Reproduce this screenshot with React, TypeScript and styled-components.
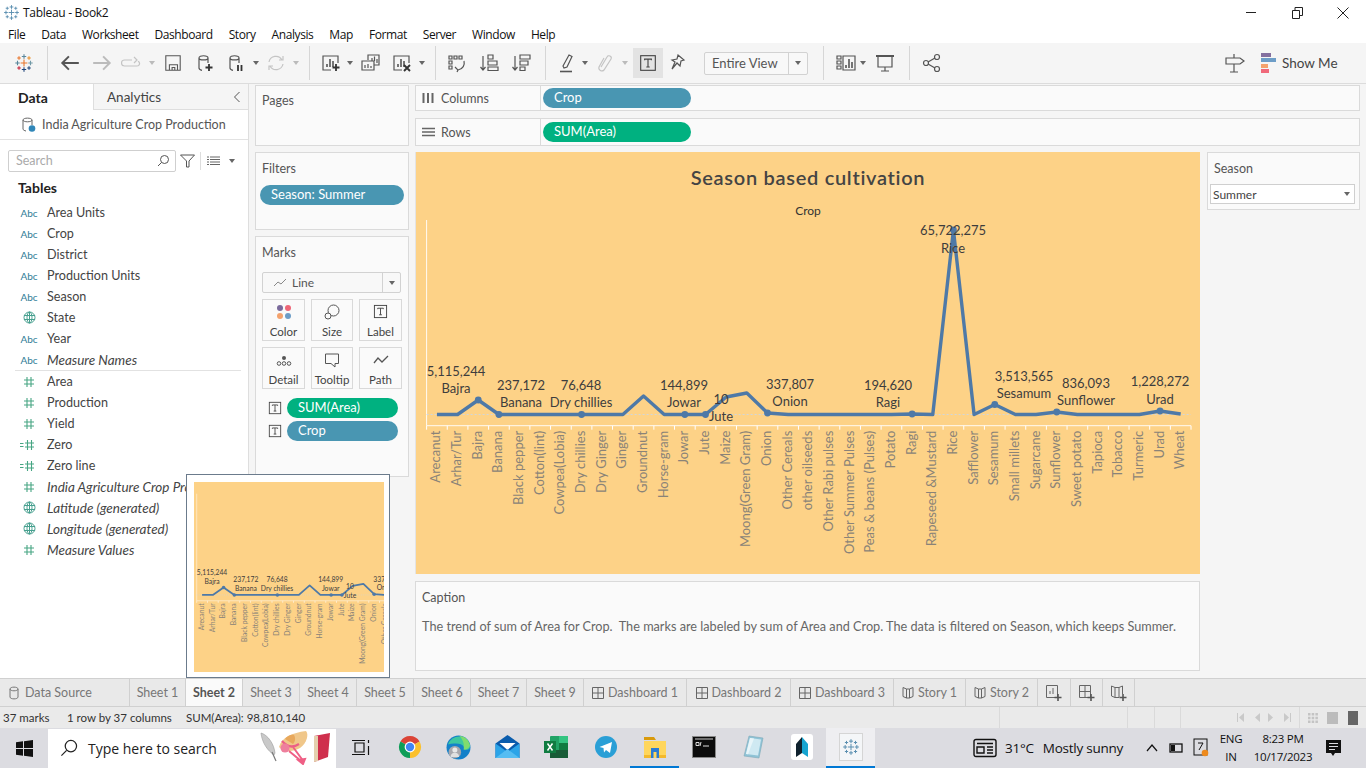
import React from "react";
import styled, { createGlobalStyle } from "styled-components";

// ─── Data ────────────────────────────────────────────────────────────────────

type Crop = { name: string; y?: number; mark?: boolean };

const crops: Crop[] = [
  { name: "Arecanut" },
  { name: "Arhar/Tur" },
  { name: "Bajra", y: 400, mark: true },
  { name: "Banana", mark: true },
  { name: "Black pepper" },
  { name: "Cotton(lint)" },
  { name: "Cowpea(Lobia)" },
  { name: "Dry chillies", mark: true },
  { name: "Dry Ginger" },
  { name: "Ginger" },
  { name: "Groundnut", y: 396 },
  { name: "Horse-gram" },
  { name: "Jowar", mark: true },
  { name: "Jute", mark: true },
  { name: "Maize", y: 397 },
  { name: "Moong(Green Gram)", y: 393 },
  { name: "Onion", y: 413, mark: true },
  { name: "Other Cereals" },
  { name: "other oilseeds" },
  { name: "Other Rabi pulses" },
  { name: "Other Summer Pulses" },
  { name: "Peas & beans (Pulses)" },
  { name: "Potato" },
  { name: "Ragi", y: 414, mark: true },
  { name: "Rapeseed &Mustard" },
  { name: "Rice", y: 230, mark: true },
  { name: "Safflower" },
  { name: "Sesamum", y: 404.5, mark: true },
  { name: "Small millets" },
  { name: "Sugarcane" },
  { name: "Sunflower", y: 412, mark: true },
  { name: "Sweet potato" },
  { name: "Tapioca" },
  { name: "Tobacco" },
  { name: "Turmeric" },
  { name: "Urad", y: 411, mark: true },
  { name: "Wheat", y: 414 },
];

const markLabels = [
  { value: "5,115,244", name: "Bajra", x: 455, y: 371, nameY: 388 },
  { value: "237,172", name: "Banana", x: 520, y: 385, nameY: 402 },
  { value: "76,648", name: "Dry chillies", x: 580, y: 385, nameY: 402 },
  { value: "144,899", name: "Jowar", x: 683, y: 385, nameY: 402 },
  { value: "10", name: "Jute", x: 720, y: 399, nameY: 416 },
  { value: "337,807", name: "Onion", x: 789, y: 384, nameY: 401 },
  { value: "194,620", name: "Ragi", x: 887, y: 385, nameY: 402 },
  { value: "65,722,275", name: "Rice", x: 952, y: 230, nameY: 248 },
  { value: "3,513,565", name: "Sesamum", x: 1023, y: 376, nameY: 393 },
  { value: "836,093", name: "Sunflower", x: 1085, y: 383, nameY: 400 },
  { value: "1,228,272", name: "Urad", x: 1159, y: 381, nameY: 399 },
];

const fieldsTop = [
  { kind: "abc", name: "Area Units" },
  { kind: "abc", name: "Crop" },
  { kind: "abc", name: "District" },
  { kind: "abc", name: "Production Units" },
  { kind: "abc", name: "Season" },
  { kind: "geo", name: "State" },
  { kind: "abc", name: "Year" },
  { kind: "abc", name: "Measure Names", italic: true },
];

const fieldsBottom = [
  { kind: "num", name: "Area" },
  { kind: "num", name: "Production" },
  { kind: "num", name: "Yield" },
  { kind: "calc", name: "Zero" },
  { kind: "calc", name: "Zero line" },
  { kind: "num", name: "India Agriculture Crop Production", italic: true },
  { kind: "geo", name: "Latitude (generated)", italic: true },
  { kind: "geo", name: "Longitude (generated)", italic: true },
  { kind: "num", name: "Measure Values", italic: true },
];

const sheetTabs = [
  { label: "Sheet 1", w: 56 },
  { label: "Sheet 2", w: 57, active: true },
  { label: "Sheet 3", w: 57 },
  { label: "Sheet 4", w: 57 },
  { label: "Sheet 5", w: 57 },
  { label: "Sheet 6", w: 57 },
  { label: "Sheet 7", w: 56 },
  { label: "Sheet 9", w: 57 },
  { label: "Dashboard 1", w: 103, icon: "dash" },
  { label: "Dashboard 2", w: 104, icon: "dash" },
  { label: "Dashboard 3", w: 103, icon: "dash" },
  { label: "Story 1", w: 72, icon: "story" },
  { label: "Story 2", w: 72, icon: "story" },
];

// ─── Styled components ───────────────────────────────────────────────────────

const Global = createGlobalStyle`
  html, body { margin: 0; padding: 0; background: #fff; overflow: hidden; }
  * { box-sizing: border-box; }
  body { font-family: "Lato", "Open Sans", sans-serif; color: #333; }
`;

const Page = styled.div`
  width: 1366px;
  height: 768px;
  display: flex;
  flex-direction: column;
  position: relative;
  overflow: hidden;
`;

const TitleBar = styled.div`
  height: 25px;
  display: flex;
  align-items: center;
  padding-left: 3px;
  font: 12px "Open Sans", sans-serif;
  letter-spacing: -0.3px;
  color: #111;
  flex: none;
`;

const TitleText = styled.span`
  margin-left: 3px;
  flex: 1;
`;

const WinButton = styled.div`
  width: 46px;
  height: 25px;
  display: flex;
  align-items: center;
  justify-content: center;
`;

const MenuBar = styled.div`
  height: 18px;
  display: flex;
  align-items: center;
  padding-left: 8px;
  gap: 16px;
  font: 12px "Open Sans", sans-serif;
  letter-spacing: -0.42px;
  color: #111;
  flex: none;
`;

const Toolbar = styled.div`
  height: 41px;
  flex: none;
  display: flex;
  align-items: center;
  background: #f5f5f5;
  border-bottom: 1px solid #dcdcdc;
`;

const ToolCell = styled.div<{ $w: number; $on?: boolean }>`
  width: ${(p) => p.$w}px;
  height: 30px;
  flex: none;
  display: flex;
  align-items: center;
  justify-content: center;
  background: ${(p) => (p.$on ? "#e3e3e3" : "transparent")};
`;

const ToolDivider = styled.div<{ $ml?: number; $mr?: number }>`
  width: 1px;
  height: 34px;
  flex: none;
  background: #d6d6d6;
  margin-left: ${(p) => p.$ml ?? 0}px;
  margin-right: ${(p) => p.$mr ?? 0}px;
`;

const Caret = styled.span<{ $light?: boolean }>`
  width: 0;
  height: 0;
  flex: none;
  border-left: 3px solid transparent;
  border-right: 3px solid transparent;
  border-top: 4px solid ${(p) => (p.$light ? "#bbb" : "#666")};
  display: inline-block;
`;

const FitSelect = styled.div`
  width: 104px;
  height: 23px;
  margin: 0 15px 0 13px;
  flex: none;
  display: flex;
  align-items: center;
  border: 1px solid #d2d2d2;
  border-radius: 2px;
  font-size: 13px;
  color: #555;
  background: #f8f8f8;
`;

const FitLabel = styled.span`
  flex: 1;
  padding-left: 7px;
`;

const FitArrow = styled.span`
  width: 19px;
  height: 100%;
  border-left: 1px solid #d2d2d2;
  display: flex;
  align-items: center;
  justify-content: center;
`;

const ToolSpacer = styled.div`
  flex: 1;
`;

const ShowMe = styled.div`
  width: 88px;
  display: flex;
  align-items: center;
  gap: 6px;
  font-size: 13.5px;
  color: #444;
  flex: none;
`;

const Main = styled.div`
  height: 594px;
  flex: none;
  display: flex;
  background: #f5f5f5;
  position: relative;
`;

const DataPane = styled.aside`
  width: 249px;
  flex: none;
  background: #fff;
  border-right: 1px solid #dedede;
  overflow: hidden;
`;

const PaneTabs = styled.div`
  height: 26px;
  display: flex;
`;

const DataTab = styled.div`
  width: 93px;
  padding-left: 18px;
  display: flex;
  align-items: center;
  font-weight: 700;
  font-size: 14px;
  color: #222;
`;

const AnalyticsTab = styled.div`
  flex: 1;
  display: flex;
  align-items: center;
  justify-content: space-between;
  padding: 0 7px 0 13px;
  font-size: 13.5px;
  color: #444;
  background: #f5f5f5;
  border-left: 1px solid #dedede;
  border-bottom: 1px solid #dedede;
`;

const SourceRow = styled.div`
  height: 30px;
  padding-left: 22px;
  display: flex;
  align-items: center;
  gap: 6px;
  font-size: 12.5px;
  color: #555;
  border-bottom: 1px solid #e2e2e2;
`;

const SearchRow = styled.div`
  display: flex;
  align-items: center;
  height: 22px;
  margin-top: 10px;
  padding-left: 8px;
`;

const SearchBox = styled.div`
  width: 168px;
  height: 22px;
  border: 1px solid #cfcfcf;
  border-radius: 2px;
  display: flex;
  align-items: center;
  justify-content: space-between;
  padding: 0 5px 1px 7px;
  font-size: 12.5px;
  color: #aaa;
`;

const SearchTools = styled.div`
  display: flex;
  align-items: center;
  margin-left: 4px;
`;

const ThinRule = styled.span`
  width: 1px;
  height: 18px;
  background: #ddd;
  margin: 0 6px 0 5px;
`;

const CaretGap = styled.span`
  width: 9px;
`;

const TablesHeading = styled.div`
  height: 20px;
  margin: 5px 0 5px 18px;
  display: flex;
  align-items: center;
  font-weight: 700;
  font-size: 14px;
  color: #222;
`;

const FieldRow = styled.div<{ $italic?: boolean }>`
  height: 21px;
  display: flex;
  align-items: center;
  padding-left: 18px;
  gap: 7px;
  font-size: ${(p) => (p.$italic ? "13.5px" : "12.6px")};
  white-space: nowrap;
  color: #444;
  font-style: ${(p) => (p.$italic ? "italic" : "normal")};
`;

const FieldIcon = styled.span`
  width: 22px;
  flex: none;
  display: flex;
  align-items: center;
  justify-content: center;
  font-style: normal;
  font-size: 10px;
  color: #2f7c96;
`;

const FieldRule = styled.div`
  height: 1px;
  margin: 0 7px 0 15px;
  background: #e2e2e2;
`;

const ShelfColumn = styled.div`
  width: 154px;
  margin: 1px 6px 0 6px;
  flex: none;
  display: flex;
  flex-direction: column;
`;

const Card = styled.section<{ $h: number; $gap?: number; $pt?: number }>`
  height: ${(p) => p.$h}px;
  margin-bottom: ${(p) => p.$gap ?? 0}px;
  background: #fafafa;
  border: 1px solid #dadada;
  padding: ${(p) => p.$pt ?? 7}px 4px 0 4px;
  flex: none;
`;

const CardTitle = styled.div`
  height: 16px;
  padding-left: 2px;
  font-size: 12.5px;
  line-height: 17px;
  color: #555;
`;

const Pill = styled.div<{ $green?: boolean; $w?: number }>`
  height: 20px;
  width: ${(p) => (p.$w ? `${p.$w}px` : "100%")};
  border-radius: 10px;
  background: ${(p) => (p.$green ? "#00b180" : "#4996b2")};
  color: #fff;
  font-size: 13px;
  line-height: 19px;
  padding-left: 11px;
  flex: none;
`;

const FilterSlot = styled.div`
  margin-top: 9px;
`;

const MarkSelect = styled.div`
  height: 21px;
  margin: 12px 3px 6px 2px;
  border: 1px solid #d2d2d2;
  border-radius: 2px;
  display: flex;
  align-items: center;
  background: #f8f8f8;
  font-size: 12px;
  color: #555;
`;

const MarkSelectBody = styled.span`
  flex: 1;
  display: flex;
  align-items: center;
  gap: 5px;
  padding-left: 10px;
`;

const MarkArrow = styled.span`
  width: 18px;
  height: 100%;
  border-left: 1px solid #d2d2d2;
  display: flex;
  align-items: center;
  justify-content: center;
`;

const MarkGrid = styled.div`
  display: grid;
  grid-template-columns: 43px 42px 43px;
  grid-auto-rows: 42px;
  gap: 6px;
  margin-left: 2px;
`;

const MarkButton = styled.div`
  border: 1px solid #d9d9d9;
  background: #fafafa;
  display: flex;
  flex-direction: column;
  align-items: center;
  justify-content: space-between;
  padding: 4px 0 2px;
  font-size: 11.5px;
  color: #444;
`;

const MarkPills = styled.div`
  margin: 9px 0 0 8px;
  display: flex;
  flex-direction: column;
  gap: 3px;
`;

const MarkPillRow = styled.div`
  display: flex;
  align-items: center;
  gap: 5px;
`;

const Workspace = styled.div`
  width: 945px;
  margin-top: 1px;
  flex: none;
  display: flex;
  flex-direction: column;
`;

const Shelf = styled.div<{ $h: number; $mb: number }>`
  height: ${(p) => p.$h}px;
  margin-bottom: ${(p) => p.$mb}px;
  display: flex;
  align-items: center;
  background: #fafafa;
  border: 1px solid #dadada;
  flex: none;
`;

const ShelfLabel = styled.div`
  width: 125px;
  height: 100%;
  flex: none;
  display: flex;
  align-items: center;
  gap: 6px;
  padding-left: 6px;
  margin-right: 2px;
  border-right: 1px solid #dadada;
  font-size: 12.5px;
  color: #555;
`;

const ViewRow = styled.div`
  display: flex;
  gap: 7px;
`;

const ViewColumn = styled.div`
  width: 785px;
  display: flex;
  flex-direction: column;
  gap: 7px;
`;

const ChartCard = styled.div`
  height: 422px;
  background: #fdd287;
  border-left: 1px solid #e4e4e4;
`;

const ChartSvg = styled.svg`
  display: block;
  width: 100%;
  height: 100%;
`;

const CaptionCard = styled.div`
  height: 90px;
  background: #fafafa;
  border: 1px solid #dadada;
  padding: 8px 6px;
`;

const CaptionTitle = styled.div`
  font-size: 12.5px;
  line-height: 16px;
  color: #555;
`;

const CaptionText = styled.div`
  margin-top: 12px;
  font-size: 12.7px;
  line-height: 16px;
  white-space: nowrap;
  color: #666;
`;

const LegendCard = styled.div`
  width: 153px;
  height: 58px;
  background: #fafafa;
  border: 1px solid #dadada;
  padding: 7px 4px 0 2px;
`;

const LegendTitle = styled(CardTitle)`
  padding-left: 4px;
`;

const LegendSelect = styled.div`
  height: 20px;
  width: 145px;
  margin-top: 8px;
  background: #fff;
  border: 1px solid #cfcfcf;
  display: flex;
  align-items: center;
  justify-content: space-between;
  padding: 0 4px 0 2px;
  font-size: 12px;
  color: #444;
`;

const DragThumb = styled.div`
  position: absolute;
  left: 186px;
  top: 390px;
  width: 204px;
  height: 204px;
  background: #fff;
  border: 1px solid #6b7b8c;
  padding: 7px;
`;

const ThumbInner = styled.div`
  width: 190px;
  height: 190px;
  background: #fdd287;
  overflow: hidden;
`;

const TabBar = styled.div`
  height: 29px;
  flex: none;
  display: flex;
  background: #e9e9e9;
  border-top: 1px solid #d0d0d0;
  border-bottom: 1px solid #d0d0d0;
`;

const SourceTab = styled.div`
  width: 130px;
  flex: none;
  display: flex;
  align-items: center;
  gap: 6px;
  padding-left: 9px;
  font-size: 12.5px;
  color: #777;
  border-right: 1px solid #d0d0d0;
`;

const SheetTab = styled.div<{ $w: number; $active?: boolean }>`
  width: ${(p) => p.$w}px;
  flex: none;
  display: flex;
  align-items: center;
  justify-content: center;
  gap: 4px;
  font-size: 12.5px;
  font-weight: ${(p) => (p.$active ? 700 : 400)};
  color: ${(p) => (p.$active ? "#555" : "#777")};
  background: ${(p) => (p.$active ? "#fafafa" : "transparent")};
  border-right: 1px solid #d0d0d0;
`;

const AddTab = styled.div<{ $w: number }>`
  width: ${(p) => p.$w}px;
  flex: none;
  display: flex;
  align-items: center;
  justify-content: center;
  border-right: 1px solid #d0d0d0;
`;

const StatusBar = styled.div`
  height: 21px;
  flex: none;
  display: flex;
  align-items: center;
  background: #eaeaea;
  font-size: 11.5px;
  color: #333;
`;

const StatusText = styled.span<{ $w: number; $pl?: number }>`
  width: ${(p) => p.$w}px;
  padding-left: ${(p) => p.$pl ?? 0}px;
  flex: none;
  white-space: nowrap;
`;

const StatusCell = styled.div<{ $w: number }>`
  width: ${(p) => p.$w}px;
  height: 100%;
  flex: none;
  display: flex;
  align-items: center;
  justify-content: center;
  gap: 8px;
  border-left: 1px solid #dadada;
`;

const PagerArrows = styled.svg`
  margin-left: 48px;
`;

const Taskbar = styled.div`
  height: 40px;
  flex: none;
  display: flex;
  align-items: center;
  background: #dcdce1;
`;

const StartButton = styled.div`
  width: 48px;
  height: 100%;
  flex: none;
  display: flex;
  align-items: center;
  justify-content: center;
`;

const TaskSearch = styled.div`
  width: 288px;
  height: 39px;
  flex: none;
  background: #fff;
  display: flex;
  align-items: center;
  padding-left: 12px;
  gap: 10px;
  font: 14px "Open Sans", sans-serif;
  color: #222;
`;

const SearchArt = styled.div`
  margin-left: auto;
  margin-right: 4px;
  display: flex;
  align-items: center;
`;

const TaskIcon = styled.div<{ $active?: boolean; $current?: boolean }>`
  width: 49px;
  height: 100%;
  flex: none;
  display: flex;
  align-items: center;
  justify-content: center;
  background: ${(p) => (p.$current ? "#eeeef1" : "transparent")};
  border-bottom: 2px solid ${(p) => (p.$active ? "#0078d4" : "transparent")};
`;

const Tray = styled.div`
  margin-left: auto;
  height: 100%;
  display: flex;
  align-items: center;
  font: 12.5px "Open Sans", sans-serif;
  color: #111;
`;

const Weather = styled.div`
  display: flex;
  align-items: center;
  gap: 8px;
  font-size: 13.5px;
  margin-right: 23px;
  letter-spacing: -0.25px;
`;

const Temperature = styled.span`
  margin-right: 1px;
`;

const TrayIcons = styled.div`
  display: flex;
  align-items: center;
  gap: 10.5px;
  margin-right: -1px;
`;

const TrayStack = styled.div<{ $w: number }>`
  width: ${(p) => p.$w}px;
  display: flex;
  flex-direction: column;
  align-items: center;
  font-size: 11.5px;
  line-height: 18px;
  letter-spacing: -0.25px;
`;

const Notify = styled.div`
  width: 42px;
  margin-right: 12px;
  display: flex;
  justify-content: center;
`;

// ─── Icons ───────────────────────────────────────────────────────────────────

type IconProps = { size?: number; color?: string; children?: React.ReactNode };

const I = ({ size = 20, color = "#555", children }: IconProps) => (
  <svg width={size} height={size} viewBox="0 0 20 20" fill="none" stroke={color} strokeWidth={1.2}>
    {children}
  </svg>
);

const TableauMark = ({ size = 20, mono }: { size?: number; mono?: boolean }) => {
  const crosses: [number, number, number, string][] = [
    [10, 10, 3.4, mono ? "#5a8fb0" : "#e8762c"],
    [10, 3.5, 2.2, mono ? "#5a8fb0" : "#5b879b"],
    [10, 16.5, 2.2, mono ? "#5a8fb0" : "#1f447a"],
    [3.5, 10, 2.2, mono ? "#5a8fb0" : "#59879b"],
    [16.5, 10, 2.2, mono ? "#5a8fb0" : "#7099a6"],
    [5, 5, 1.8, mono ? "#5a8fb0" : "#e8762c"],
    [15, 5, 1.8, mono ? "#5a8fb0" : "#eb912b"],
    [5, 15, 1.8, mono ? "#5a8fb0" : "#c72037"],
    [15, 15, 1.8, mono ? "#5a8fb0" : "#1f447a"],
  ];
  return (
    <svg width={size} height={size} viewBox="0 0 20 20" fill="none" strokeWidth={1.1}>
      {crosses.map(([x, y, r, c], i) => (
        <path key={i} d={`M${x - r} ${y}H${x + r}M${x} ${y - r}V${y + r}`} stroke={c} />
      ))}
    </svg>
  );
};

const Cylinder = () => (
  <path d="M4 5c0-3 9-3 9 0v5M4 5c0 2.600 9 2.600 9 0M4 5v10c0 1.500 1.500 2 3 2.300" />
);

const BarChartBox = () => (
  <>
    <path d="M10 3H2v14h8M10 3h7v7" />
    <path d="M6 14v-3M9 14V6M12 14V8" strokeWidth={1.6} />
  </>
);

const TextBox = ({ size = 16 }: { size?: number }) => (
  <svg width={size} height={size} viewBox="0 0 16 16" fill="none" stroke="#444">
    <rect x="1.500" y="1.500" width="13" height="13" />
    <path d="M5 5.500V4.500h6v1M8 4.500v7M6.500 11.500h3" />
  </svg>
);

const Hash = ({ prefix }: { prefix?: boolean }) => (
  <svg width="18" height="12" viewBox="0 0 18 12" fill="none" stroke="#47a583" strokeWidth={1.1}>
    <path d={prefix ? "M7.500 1v10M11.500 1v10M5 4h9M5 8h9" : "M7 1v10M11 1v10M4 4h10M4 8h10"} />
    {prefix && <path d="M0 4.500h3.500M0 7.500h3.500" />}
  </svg>
);

const Globe = () => (
  <svg width="13" height="13" viewBox="0 0 13 13" fill="none" stroke="#47a08f" strokeWidth={1}>
    <circle cx="6.500" cy="6.500" r="5.500" />
    <ellipse cx="6.500" cy="6.500" rx="2.500" ry="5.500" />
    <path d="M1 4.500h11M1 8.500h11M6.500 1v11" />
  </svg>
);

const DashIcon = () => (
  <svg width="12" height="12" viewBox="0 0 12 12" fill="none" stroke="#666">
    <path d="M.5.5h11v11H.5zM6 .5v11M.5 6h11" />
  </svg>
);

const StoryIcon = () => (
  <svg width="12" height="13" viewBox="0 0 12 13" fill="none" stroke="#666">
    <path d="M1 1.500l3.500 1.500v9L1 10.500zM4.500 3h3v9h-3M7.500 3L11 1.500v9L7.500 12" />
  </svg>
);

const AddBase = ({ children }: { children: React.ReactNode }) => (
  <svg width="18" height="18" viewBox="0 0 18 18" fill="none" stroke="#666">
    {children}
    <path d="M13 10v7M9.500 13.500h7" strokeWidth={1.6} stroke="#555" />
  </svg>
);

const ChromeIcon = () => (
  <svg width="24" height="24" viewBox="0 0 24 24">
    <path d="M2.470 6.500A11 11 0 0 1 21.530 6.500L12 12z" fill="#db4437" />
    <path d="M21.530 6.500A11 11 0 0 1 12 23L12 12z" fill="#fbc02d" />
    <path d="M12 23A11 11 0 0 1 2.470 6.500L12 12z" fill="#0f9d58" />
    <circle cx="12" cy="12" r="5.400" fill="#fff" />
    <circle cx="12" cy="12" r="4.200" fill="#4285f4" />
  </svg>
);

const EdgeIcon = () => (
  <svg width="25" height="25" viewBox="0 0 24 24">
    <circle cx="12" cy="12" r="11.500" fill="#1481c9" />
    <path d="M2 9C5 0 19-2 23 9c1 4-2 6-6 5 1-3-1-5-5-5.500C8 8 5 8 2 9z" fill="#3dc7a0" />
    <path d="M13 1c5 0 9 4 10 9-1 3-4 4-6 4 1-5-1-10-4-13z" fill="#7fdc6e" />
    <circle cx="8.500" cy="16.500" r="6" fill="#a8a8ad" />
    <circle cx="8.500" cy="14.500" r="2.400" fill="#e8e8e8" />
    <path d="M4.500 21c0-3 2-4 4-4s4 1 4 4z" fill="#e0e0e0" />
  </svg>
);

const MailIcon = () => (
  <svg width="25" height="24" viewBox="0 0 24 24">
    <path d="M0 8.500L12 0l12 8.500V23H0z" fill="#0a5cad" />
    <path d="M4 8h16l-8 7z" fill="#fff" />
    <path d="M0 8.500L12 17l12-8.500V23H0z" fill="#2ba4e8" />
    <path d="M0 23l12-9 12 9z" fill="#55bdf2" />
  </svg>
);

const ExcelIcon = () => (
  <svg width="25" height="24" viewBox="0 0 25 24">
    <rect x="6" y="1" width="18" height="22" rx="1" fill="#21a366" />
    <rect x="15" y="1" width="9" height="7" fill="#33c481" />
    <rect x="6" y="15" width="18" height="8" fill="#185c37" />
    <rect x="15" y="8" width="9" height="7" fill="#107c41" />
    <rect x="0" y="6" width="12" height="12" fill="#107c41" />
    <path d="M3.500 8.500l5 7M8.500 8.500l-5 7" stroke="#fff" strokeWidth={1.5} />
  </svg>
);

const TelegramIcon = () => (
  <svg width="24" height="24" viewBox="0 0 24 24">
    <circle cx="12" cy="12" r="11" fill="#2a9fd6" />
    <path d="M5.500 12L18 7l-2 11-4-3-2 2.500-.5-4.500z" fill="#fff" />
  </svg>
);

const FolderIcon = () => (
  <svg width="24" height="22" viewBox="0 0 24 22">
    <path d="M1 1h10l2 3H1z" fill="#d99a0c" />
    <path d="M1 5h22v17H1z" fill="#ffd65c" />
    <path d="M8 12h8v10h-2.500v-6h-3v6H8z" fill="#2b7cd3" />
    <path d="M1 19h7v3H1zM16 19h7v3h-7z" fill="#f3b92c" />
  </svg>
);

const CmdIcon = () => (
  <svg width="24" height="22" viewBox="0 0 24 22">
    <rect x="0.500" y="0.500" width="23" height="21" fill="#0c0c0c" stroke="#888" />
    <path d="M3 3h18" stroke="#ccc" />
    <path d="M4 6.500h3v3H4zM9 6l-1 4M11 10h6" stroke="#ddd" fill="none" />
  </svg>
);

const NotepadIcon = () => (
  <svg width="24" height="26" viewBox="0 0 24 26">
    <path d="M8 2l14 2-4 20-15-2z" fill="#8fc3d6" stroke="#7ea9b8" strokeWidth={0.6} />
    <path d="M9 4l11 1.500-3 16L5 20z" fill="#cfe9f2" />
    <path d="M9 4l4 .5-6 15.800L5 20z" fill="#e8f5f9" />
  </svg>
);

const ReaderIcon = () => (
  <svg width="24" height="28" viewBox="0 0 24 28">
    <rect x="1" y="1" width="22" height="26" rx="3" fill="#fff" />
    <path d="M12 4L6 11v13l6-4z" fill="#10222e" />
    <path d="M12 4l6 7v13l-6-4z" fill="#16a4d0" />
  </svg>
);

const TableauTile = () => (
  <svg width="28" height="30" viewBox="0 0 28 30">
    <rect x="2.500" y="1.500" width="23" height="27" fill="#f4f6f8" stroke="#d5d5d5" />
    <g transform="translate(5 6)">
      <TableauMark size={18} mono />
    </g>
  </svg>
);

// feather, sun hat and book from the search box decoration
const DoodleArt = () => (
  <svg width="72" height="34" viewBox="0 0 72 34">
    <path d="M1 2c7 2 13 11 14 20l-1 2C8 20 2 12 1 2z" fill="#c9c9c9" stroke="#9a9a9a" strokeWidth={0.6} />
    <path d="M12 21l4 9" stroke="#777" strokeWidth={1.2} />
    <path d="M19 16C22 6 32 2 46 0c3 3 1 12-6 17-7 4-17 4-21-1z" fill="#f0c78a" />
    <path d="M25 8c2-3 6-5 9-4 2 3 1 7-1 9z" fill="#e8a85c" />
    <path d="M22 10c5 6 11 7 17 3" stroke="#ec5f86" strokeWidth={2.2} fill="none" />
    <circle cx="25" cy="17" r="4.500" fill="#ee7f9d" />
    <path d="M29 20l12 10M33 16l11 15M38 29l7-1-2 5z" stroke="#ef5f85" strokeWidth={2} fill="#ef5f85" />
    <path d="M54 5l16-3-2 24-14 5z" fill="#cf2f4c" />
    <path d="M54 5l4 0v25l-4 1z" fill="#e4cfae" />
  </svg>
);

// ─── Chart ───────────────────────────────────────────────────────────────────

const originX = 415;
const originY = 152;
const step = 20.66;
const startX = 425.6 - originX;
const base = 414.5 - originY;
const axisY = 425.7 - originY;

const points = crops.map((c, i) => ({
  x: startX + step * (i + 0.5),
  y: (c.y ?? 414.5) - originY,
  mark: c.mark,
}));

// the same marks are shown in the drag thumbnail, so this stays a plain group
const ChartBody = () => (
  <g fontFamily="Lato, sans-serif">
    <path d={`M${startX} ${220 - originY}V${axisY}H${startX + step * 37}`} stroke="#fff" strokeWidth={1} fill="none" opacity={0.9} />
    <path d={`M${startX} ${base}H${startX + step * 37}`} stroke="#cfd6dc" strokeWidth={1} strokeDasharray="2 2" />
    {crops.map((c, i) => (
      <path key={c.name} d={`M${startX + step * i} ${axisY}v4`} stroke="#fff" />
    ))}
    <path d={`M${startX + step * 37} ${axisY}v4`} stroke="#fff" />
    {crops.map((c, i) => {
      const x = points[i].x + 3.5;
      const y = axisY + 5;
      return (
        <text key={c.name} transform={`rotate(-90 ${x} ${y})`} x={x} y={y} textAnchor="end" fontSize={13} fill="#8a8378">
          {c.name}
        </text>
      );
    })}
    <polyline
      points={points.map((p) => `${p.x},${p.y}`).join(" ")}
      fill="none"
      stroke="#4e79a7"
      strokeWidth={3.4}
      strokeLinejoin="round"
    />
    {points.filter((p) => p.mark).map((p) => (
      <circle key={p.x} cx={p.x} cy={p.y} r={3.4} fill="#4e79a7" />
    ))}
    {markLabels.map((l) => (
      <g key={l.name} textAnchor="middle" fontSize={13} fill="#3d3d3d">
        <text x={l.x - originX} y={l.y - originY + 5}>{l.value}</text>
        <text x={l.x - originX} y={l.nameY - originY + 4.5}>{l.name}</text>
      </g>
    ))}
  </g>
);

// ─── App ─────────────────────────────────────────────────────────────────────

const fieldIcon = (kind: string) => {
  if (kind === "abc") return "Abc";
  if (kind === "geo") return <Globe />;
  if (kind === "calc") return <Hash prefix />;
  return <Hash />;
};

export default function App() {
  return (
    <Page>
      <Global />
      <TitleBar>
        <TableauMark size={17} mono />
        <TitleText>Tableau - Book2</TitleText>
        <WinButton>
          <svg width="11" height="11" viewBox="0 0 11 11" stroke="#222"><path d="M0 5.500h10" /></svg>
        </WinButton>
        <WinButton>
          <svg width="11" height="12" viewBox="0 0 11 12" fill="none" stroke="#222"><path d="M.5 3.500h7v8h-7zM3 3.500V.5h7.500v8H8" /></svg>
        </WinButton>
        <WinButton>
          <svg width="12" height="12" viewBox="0 0 12 12" stroke="#222"><path d="M.5.5l11 11M11.500.5L.5 11.500" /></svg>
        </WinButton>
      </TitleBar>
      <MenuBar>
        {["File", "Data", "Worksheet", "Dashboard", "Story", "Analysis", "Map", "Format", "Server", "Window", "Help"].map((m) => (
          <span key={m}>{m}</span>
        ))}
      </MenuBar>

      <Toolbar>
        <ToolCell $w={47}><TableauMark size={20} /></ToolCell>
        <ToolDivider $mr={6} />
        <ToolCell $w={32}><I size={22} color="#555"><path d="M18 10H3M9 4l-6 6 6 6" strokeWidth={1.8} /></I></ToolCell>
        <ToolCell $w={32}><I size={22} color="#bbb"><path d="M2 10h15M11 4l6 6-6 6" strokeWidth={1.8} /></I></ToolCell>
        <ToolCell $w={26}><I size={20} color="#c4c4c4"><path d="M11 7H3.500a2.500 2.500 0 0 0 0 6H16a2.500 2.500 0 0 0 1-4.800M13 4l3 3-3 3" /></I></ToolCell>
        <ToolCell $w={16}><Caret $light /></ToolCell>
        <ToolCell $w={26}><I size={18}><path d="M2 2h16v16H2zM6 18v-6h9v6M9 18v-3h3v3" /></I></ToolCell>
        <ToolCell $w={3} />
        <ToolCell $w={32}><I size={20}><Cylinder /><path d="M14 11v7M10.500 14.500h7" strokeWidth={1.8} stroke="#333" /></I></ToolCell>
        <ToolCell $w={30}><I size={20}><Cylinder /><path d="M12 12v6M15.500 12v6" strokeWidth={1.8} stroke="#333" /></I></ToolCell>
        <ToolCell $w={10}><Caret /></ToolCell>
        <ToolCell $w={30}><I size={20} color="#c4c4c4"><path d="M3 9a7 7 0 0 1 13-2M17 11a7 7 0 0 1-13 2M17 3v4h-4M3 17v-4h4" /></I></ToolCell>
        <ToolCell $w={10}><Caret $light /></ToolCell>
        <ToolDivider $ml={8} $mr={6} />
        <ToolCell $w={30}><I size={20}><BarChartBox /><path d="M15 11v7M11.500 14.500h7" strokeWidth={1.8} stroke="#333" /></I></ToolCell>
        <ToolCell $w={8}><Caret /></ToolCell>
        <ToolCell $w={34}><I size={20}><path d="M7 7V2h11v10h-5M1 8h12v9H1z" /><path d="M11 8V5M13.500 8V3.500M16 10V6M4 15v-3M7 15v-4M10 15v-2" /></I></ToolCell>
        <ToolCell $w={28}><I size={20}><BarChartBox /><path d="M12 12l6 6M18 12l-6 6" strokeWidth={1.9} stroke="#333" /></I></ToolCell>
        <ToolCell $w={12}><Caret /></ToolCell>
        <ToolDivider $ml={7} $mr={5} />
        <ToolCell $w={32}><I size={20}><path d="M2 3h3v3H2zM7 3h3v3H7zM12 3h3v3h-3zM2 8h3v3H2zM2 13h3v3H2z" /><path d="M17 8c1 4-1 8-6 9M8 14l3 3-1 2" /></I></ToolCell>
        <ToolCell $w={32}><I size={20}><path d="M4 3v14M1.500 14L4 17l2.500-3" /><path d="M9 2h5v4H9zM9 8h9v4H9zM9 14h10v3.500H9z" /></I></ToolCell>
        <ToolCell $w={32}><I size={20}><path d="M4 3v14M1.500 14L4 17l2.500-3" /><path d="M9 2h10v4H9zM9 8h8v4H9zM9 14h5v3.500H9z" /></I></ToolCell>
        <ToolDivider $ml={8} $mr={8} />
        <ToolCell $w={28}><I size={20}><path d="M5 13L11 2l3 1.500L9 14l-3 1zM6 15l-1-2" /><path d="M2 18.500h12" strokeWidth={1.6} /></I></ToolCell>
        <ToolCell $w={6}><Caret /></ToolCell>
        <ToolCell $w={34}><I size={20} color="#c4c4c4"><path d="M6 14l6-10a2.200 2.200 0 0 1 4 2l-7 11a3 3 0 0 1-5-3l5-9" /></I></ToolCell>
        <ToolCell $w={6}><Caret $light /></ToolCell>
        <ToolCell $w={5} />
        <ToolCell $w={30} $on><TextBox size={18} /></ToolCell>
        <ToolCell $w={28}><I size={20}><path d="M11 2l6 5-3 1-1 5-3-3-5 6 3-7-3-2 5-1z" /></I></ToolCell>
        <FitSelect>
          <FitLabel>Entire View</FitLabel>
          <FitArrow><Caret /></FitArrow>
        </FitSelect>
        <ToolDivider $mr={8} />
        <ToolCell $w={28}><I size={20}><path d="M1 3h4v3H1zM1 8h4v3H1zM1 13h4v3H1zM7 3h12v14H7z" /><path d="M10 15v-3M13 15V6M16 15V9" strokeWidth={1.6} /></I></ToolCell>
        <ToolCell $w={6}><Caret /></ToolCell>
        <ToolCell $w={38}><I size={20}><path d="M1 3h18" strokeWidth={2} /><path d="M3 3v11h14V3M10 14v4M6 18h8" /></I></ToolCell>
        <ToolCell $w={5} />
        <ToolDivider $mr={7} />
        <ToolCell $w={30}><I size={20}><circle cx="4" cy="10" r="2.500" /><circle cx="15" cy="4" r="2.500" /><circle cx="15" cy="16" r="2.500" /><path d="M6 9l7-4M6 11l7 4" /></I></ToolCell>
        <ToolSpacer />
        <ToolCell $w={52}><I size={20}><path d="M1 5h14l4 3-4 3H1zM9 1v4M9 11v8M5 19h8" /></I></ToolCell>
        <ShowMe>
          <svg width="15" height="21" viewBox="0 0 15 21">
            <rect x="0" y="0" width="10" height="4" fill="#84709f" />
            <rect x="0" y="5" width="15" height="4" fill="#6d9dc7" />
            <rect x="0" y="11" width="7" height="4" fill="#f4a26d" />
            <rect x="0" y="16" width="8" height="4" fill="#f0697a" />
          </svg>
          Show Me
        </ShowMe>
        <ToolCell $w={17} />
      </Toolbar>

      <Main>
        <DataPane>
          <PaneTabs>
            <DataTab>Data</DataTab>
            <AnalyticsTab>
              Analytics
              <svg width="8" height="12" viewBox="0 0 8 12" fill="none" stroke="#555"><path d="M6.500 1L1.500 6l5 5" /></svg>
            </AnalyticsTab>
          </PaneTabs>
          <SourceRow>
            <svg width="14" height="15" viewBox="0 0 14 15" fill="none" stroke="#666">
              <path d="M1 3c0-2.500 9-2.500 9 0v5M1 3c0 2.400 9 2.400 9 0M1 3v9c0 1 1.500 1.700 3 2" />
              <circle cx="10" cy="11.500" r="3.300" fill="#2f86b8" stroke="none" />
            </svg>
            India Agriculture Crop Production
          </SourceRow>
          <SearchRow>
            <SearchBox>
              Search
              <svg width="13" height="13" viewBox="0 0 13 13" fill="none" stroke="#555"><circle cx="7.500" cy="5.500" r="4" /><path d="M4.500 8.500L1 12" /></svg>
            </SearchBox>
            <SearchTools>
              <svg width="15" height="14" viewBox="0 0 15 14" fill="none" stroke="#555"><path d="M.5 1h14L9 7v6H6.500V7z" /></svg>
              <ThinRule />
              <svg width="13" height="10" viewBox="0 0 13 10" stroke="#666"><path d="M0 1h2M3 1h10M0 3.500h2M3 3.500h10M0 6h2M3 6h10M0 8.500h2M3 8.500h10" /></svg>
              <CaretGap />
              <Caret />
            </SearchTools>
          </SearchRow>
          <TablesHeading>Tables</TablesHeading>
          {fieldsTop.map((f) => (
            <FieldRow key={f.name} $italic={f.italic}>
              <FieldIcon>{fieldIcon(f.kind)}</FieldIcon>
              {f.name}
            </FieldRow>
          ))}
          <FieldRule />
          {fieldsBottom.map((f) => (
            <FieldRow key={f.name} $italic={f.italic}>
              <FieldIcon>{fieldIcon(f.kind)}</FieldIcon>
              {f.name}
            </FieldRow>
          ))}
        </DataPane>

        <ShelfColumn>
          <Card $h={61} $gap={6} $pt={6}>
            <CardTitle>Pages</CardTitle>
          </Card>
          <Card $h={78} $gap={6}>
            <CardTitle>Filters</CardTitle>
            <FilterSlot>
              <Pill>Season: Summer</Pill>
            </FilterSlot>
          </Card>
          <Card $h={241}>
            <CardTitle>Marks</CardTitle>
            <MarkSelect>
              <MarkSelectBody>
                <svg width="14" height="10" viewBox="0 0 14 10" fill="none" stroke="#888"><path d="M1 8l4-4 3 2 5-5" /></svg>
                Line
              </MarkSelectBody>
              <MarkArrow><Caret /></MarkArrow>
            </MarkSelect>
            <MarkGrid>
              <MarkButton>
                <svg width="16" height="16" viewBox="0 0 16 16">
                  <circle cx="4" cy="4" r="3" fill="#7a6a9b" />
                  <circle cx="12" cy="4" r="3" fill="#ee6677" />
                  <circle cx="4" cy="12" r="3" fill="#f4a26d" />
                  <circle cx="12" cy="12" r="3" fill="#6d9dc7" />
                </svg>
                Color
              </MarkButton>
              <MarkButton>
                <svg width="16" height="16" viewBox="0 0 16 16" fill="none" stroke="#555"><circle cx="9.500" cy="6.500" r="5.500" /><circle cx="4" cy="12" r="3" fill="#fafafa" /></svg>
                Size
              </MarkButton>
              <MarkButton>
                <TextBox size={15} />
                Label
              </MarkButton>
              <MarkButton>
                <svg width="16" height="16" viewBox="0 0 16 16" fill="none" stroke="#555">
                  <circle cx="8" cy="6" r="2" fill="#555" stroke="none" />
                  <circle cx="3" cy="11.500" r="1.800" /><circle cx="8" cy="11.500" r="1.800" /><circle cx="13" cy="11.500" r="1.800" />
                </svg>
                Detail
              </MarkButton>
              <MarkButton>
                <svg width="16" height="16" viewBox="0 0 16 16" fill="none" stroke="#555"><path d="M1.500 2h13v9.500H11V15l-4-3.500H1.500z" /></svg>
                Tooltip
              </MarkButton>
              <MarkButton>
                <svg width="16" height="16" viewBox="0 0 16 16" fill="none" stroke="#555" strokeWidth={1.3}><path d="M1 11l4-5 4 4 6-6" /></svg>
                Path
              </MarkButton>
            </MarkGrid>
            <MarkPills>
              <MarkPillRow>
                <TextBox size={14} />
                <Pill $green $w={111}>SUM(Area)</Pill>
              </MarkPillRow>
              <MarkPillRow>
                <TextBox size={14} />
                <Pill $w={111}>Crop</Pill>
              </MarkPillRow>
            </MarkPills>
          </Card>
        </ShelfColumn>

        <Workspace>
          <Shelf $h={26} $mb={7}>
            <ShelfLabel>
              <svg width="13" height="10" viewBox="0 0 13 10" stroke="#666" strokeWidth={2}><path d="M1.500 0v10M6 0v10M10.500 0v10" /></svg>
              Columns
            </ShelfLabel>
            <Pill $w={148}>Crop</Pill>
          </Shelf>
          <Shelf $h={28} $mb={6}>
            <ShelfLabel>
              <svg width="13" height="10" viewBox="0 0 13 10" stroke="#666" strokeWidth={1.6}><path d="M0 1.500h13M0 5h13M0 8.500h13" /></svg>
              Rows
            </ShelfLabel>
            <Pill $green $w={148}>SUM(Area)</Pill>
          </Shelf>
          <ViewRow>
            <ViewColumn>
              <ChartCard>
                <ChartSvg viewBox="0 0 784 422">
                  <text x="392" y="33" textAnchor="middle" fontFamily="Lato, sans-serif" fontWeight={600} fontSize={20} letterSpacing={0.7} fill="#444">
                    Season based cultivation
                  </text>
                  <text x="392" y="63" textAnchor="middle" fontFamily="Lato, sans-serif" fontSize={12} fill="#333">Crop</text>
                  <ChartBody />
                </ChartSvg>
              </ChartCard>
              <CaptionCard>
                <CaptionTitle>Caption</CaptionTitle>
                <CaptionText>
                  The trend of sum of Area for Crop.&nbsp; The marks are labeled by sum of Area and Crop. The data is filtered on Season, which keeps Summer.
                </CaptionText>
              </CaptionCard>
            </ViewColumn>
            <LegendCard>
              <LegendTitle>Season</LegendTitle>
              <LegendSelect>
                Summer
                <Caret />
              </LegendSelect>
            </LegendCard>
          </ViewRow>
        </Workspace>

        <DragThumb>
          <ThumbInner>
            <ChartSvg viewBox="5.400 45.500 365 365">
              <ChartBody />
            </ChartSvg>
          </ThumbInner>
        </DragThumb>
      </Main>

      <TabBar>
        <SourceTab>
          <svg width="10" height="14" viewBox="0 0 10 14" fill="none" stroke="#777"><path d="M1 3c0-2.500 8-2.500 8 0v8c0 2.500-8 2.500-8 0zM1 3c0 2.400 8 2.400 8 0" /></svg>
          Data Source
        </SourceTab>
        {sheetTabs.map((t) => (
          <SheetTab key={t.label} $w={t.w} $active={t.active}>
            {t.icon === "dash" && <DashIcon />}
            {t.icon === "story" && <StoryIcon />}
            {t.label}
          </SheetTab>
        ))}
        <AddTab $w={33}><AddBase><path d="M1.500 1.500h11v12h-11zM5 10V7M8 10V4" /></AddBase></AddTab>
        <AddTab $w={32}><AddBase><path d="M1.500 1.500h11v12h-11zM7 1.500v12M1.500 7.500h11" /></AddBase></AddTab>
        <AddTab $w={32}><AddBase><path d="M1.500 2L5 3.500v10L1.500 12zM5 3.500h4v10H5M9 3.500L12.500 2v8" /></AddBase></AddTab>
      </TabBar>

      <StatusBar>
        <StatusText $w={67} $pl={3}>37 marks</StatusText>
        <StatusText $w={119}>1 row by 37 columns</StatusText>
        <StatusText $w={813}>SUM(Area): 98,810,140</StatusText>
        <StatusCell $w={128} />
        <StatusCell $w={27} />
        <StatusCell $w={26} />
        <StatusCell $w={119}>
          <PagerArrows width="54" height="9" viewBox="0 0 54 9" fill="#c9c9c9">
            <path d="M0 0h1v9H0zM7 0v9L2 4.500zM23 0v9l-5-4.500zM31 0v9l5-4.500zM47 0v9l5-4.500zM53 0h1v9h-1z" />
          </PagerArrows>
        </StatusCell>
        <StatusCell $w={67}>
          <svg width="50" height="14" viewBox="0 0 50 14">
            <path d="M0 2h2.500v2.500H0zM3.700 2h2.500v2.500H3.700zM7.400 2h2.500v2.500H7.400zM0 5.700h2.500v2.500H0zM3.700 5.700h2.500v2.500H3.700zM7.400 5.700h2.500v2.500H7.400zM0 9.400h2.500v2.500H0zM3.700 9.400h2.500v2.500H3.700zM7.400 9.400h2.500v2.500H7.400z" fill="#c4c4c4" />
            <path d="M19 1h11v12H19z" fill="#bcbcbc" />
            <path d="M40 0h10v14H40z" fill="#666" />
          </svg>
        </StatusCell>
      </StatusBar>

      <Taskbar>
        <StartButton>
          <svg width="17" height="17" viewBox="0 0 17 17" fill="#111"><path d="M0 2.300l7-1v6.700H0zM8 1.200l9-1.200v8H8zM0 9h7v6.700l-7-1zM8 9h9v8l-9-1.200z" /></svg>
        </StartButton>
        <TaskSearch>
          <svg width="18" height="18" viewBox="0 0 19 19" fill="none" stroke="#222" strokeWidth={1.3}><circle cx="11.500" cy="7.500" r="6" /><path d="M7 12L1.500 17.500" /></svg>
          Type here to search
          <SearchArt><DoodleArt /></SearchArt>
        </TaskSearch>
        <TaskIcon>
          <svg width="18" height="17" viewBox="0 0 18 17" fill="none" stroke="#111" strokeWidth={1.2}><path d="M3 4h9v9H3zM0 1.500h13M0 15.500h13M16.500 1v3M16.500 7v9" /></svg>
        </TaskIcon>
        <TaskIcon><ChromeIcon /></TaskIcon>
        <TaskIcon><EdgeIcon /></TaskIcon>
        <TaskIcon><MailIcon /></TaskIcon>
        <TaskIcon><ExcelIcon /></TaskIcon>
        <TaskIcon><TelegramIcon /></TaskIcon>
        <TaskIcon $active><FolderIcon /></TaskIcon>
        <TaskIcon><CmdIcon /></TaskIcon>
        <TaskIcon><NotepadIcon /></TaskIcon>
        <TaskIcon><ReaderIcon /></TaskIcon>
        <TaskIcon $active $current><TableauTile /></TaskIcon>
        <Tray>
          <Weather>
            <svg width="24" height="20" viewBox="0 0 24 20" fill="none" stroke="#111" strokeWidth={1.4}>
              <rect x="1" y="1.500" width="22" height="17" rx="2" />
              <path d="M4 5.500h16M4 9h7v6H4zM14 9h6M14 12h6M14 15h6" />
            </svg>
            <Temperature>31°C</Temperature>
            Mostly sunny
          </Weather>
          <TrayIcons>
            <svg width="12" height="8" viewBox="0 0 12 8" fill="none" stroke="#111" strokeWidth={1.2}><path d="M1 7l5-6 5 6" /></svg>
            <svg width="14" height="10" viewBox="0 0 14 10" fill="none" stroke="#111" strokeWidth={1.3}><rect x="1" y="1" width="12" height="8" /><rect x="2" y="2" width="4" height="6" fill="#111" stroke="none" /></svg>
            <svg width="16" height="20" viewBox="0 0 16 20" fill="none" stroke="#111">
              <rect x="1" y="1" width="13" height="16" />
              <path d="M5 5h5l-4 7" />
              <circle cx="12" cy="15" r="3.300" fill="#ee8a1c" stroke="none" />
            </svg>
          </TrayIcons>
          <TrayStack $w={46}>
            <span>ENG</span>
            <span>IN</span>
          </TrayStack>
          <TrayStack $w={58}>
            <span>8:23 PM</span>
            <span>10/17/2023</span>
          </TrayStack>
          <Notify>
            <svg width="17" height="18" viewBox="0 0 17 18" fill="#111"><path d="M1 1h15v13H10l-2 3-2-3H1z" /><path d="M4 4.500h9M4 7.500h9M4 10.500h6" stroke="#dcdce1" /></svg>
          </Notify>
        </Tray>
      </Taskbar>
    </Page>
  );
}
